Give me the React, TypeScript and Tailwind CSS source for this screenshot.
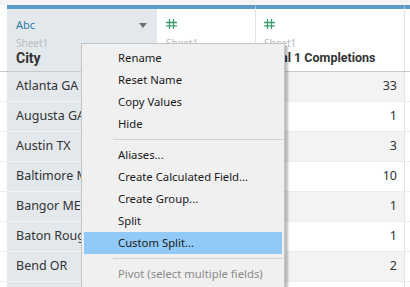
const rows = [
  { city: "Atlanta GA", value: "33" },
  { city: "Augusta GA", value: "1" },
  { city: "Austin TX", value: "3" },
  { city: "Baltimore MD", value: "10" },
  { city: "Bangor ME", value: "1" },
  { city: "Baton Rouge LA", value: "1" },
  { city: "Bend OR", value: "2" },
  { city: "", value: "" },
];

const menu: (string | null)[] = [
  "Rename",
  "Reset Name",
  "Copy Values",
  "Hide",
  null,
  "Aliases...",
  "Create Calculated Field...",
  "Create Group...",
  "Split",
  "Custom Split...",
  null,
];

function Hash() {
  return (
    <svg width="11" height="10" viewBox="0 0 11 10">
      <path d="M3.5 0v10M7.5 0v10M0 3.5h11M0 6.8h11" stroke="#3f9d6b" strokeWidth="1.3" fill="none" />
    </svg>
  );
}

export default function App() {
  return (
    <div className="relative w-[410px] h-[287px] overflow-hidden bg-white font-['Noto_Sans',sans-serif]">
      <div className="h-[5px] bg-[#f4f4f4]" />
      <div className="flex h-[67px] border-b border-[#cbcbcb]">
        <div className="w-[7px] bg-white" />
        <div className="w-[150px] flex flex-col bg-[#e3e8ec] border-t-4 border-[#5b9bc5] px-[9px]">
          <div className="flex items-center justify-between h-[16px] mt-[8px]">
            <span className="text-[11px] text-[#2f78a5]">Abc</span>
            <span className="w-0 h-0 border-l-[4px] border-r-[4px] border-t-[5px] border-l-transparent border-r-transparent border-t-[#6b7076] mr-[1px]" />
          </div>
          <span className="mt-[3px] text-[10px] leading-[14px] text-[#b8bcbf]">Sheet1</span>
          <span className="font-['Roboto',sans-serif] text-[14px] leading-[16px] font-bold text-[#333]">City</span>
        </div>
        <div className="w-px bg-white border-t-4 border-[#5b9bc5]" />
        <div className="w-[98px] flex flex-col bg-white border-t-4 border-[#5b9bc5] px-[8px] border-r border-r-[#e4e4e4]">
          <div className="flex items-center h-[16px] mt-[7px]">
            <Hash />
          </div>
          <span className="mt-[4px] text-[10px] leading-[14px] text-[#b8bcbf]">Sheet1</span>
        </div>
        <div className="w-[149px] flex flex-col bg-white border-t-4 border-[#5b9bc5] px-[8px] border-r border-r-[#e4e4e4]">
          <div className="flex items-center h-[16px] mt-[7px]">
            <Hash />
          </div>
          <span className="mt-[4px] text-[10px] leading-[14px] text-[#b8bcbf]">Sheet1</span>
          <span className="ml-[-1px] font-['Roboto',sans-serif] text-[12.5px] leading-[16px] font-bold text-[#333] whitespace-nowrap">Total 1 Completions</span>
        </div>
        <div className="flex-1 bg-white border-t-4 border-[#5b9bc5]" />
      </div>
      <div className="flex flex-col">
        {rows.map((r, i) => (
          <div key={i} className="flex h-[30px] border-b border-[#ececec]">
            <div className="w-[7px] bg-white" />
            <div className="w-[150px] bg-[#e3e8ec] border-b border-[#f2f4f6] -mb-px flex items-center px-[9px] text-[12.5px] text-[#333] whitespace-nowrap overflow-hidden">
              {r.city}
            </div>
            <div className="w-px bg-white" />
            <div className={`w-[98px] ${i % 2 === 0 ? "bg-[#f3f3f3]" : "bg-white"}`} />
            <div className={`w-[149px] flex items-center justify-end pr-[7px] text-[12.5px] text-[#333] border-r border-[#e4e4e4] ${i % 2 === 0 ? "bg-[#f3f3f3]" : "bg-white"}`}>
              {r.value}
            </div>
            <div className="flex-1 bg-white" />
          </div>
        ))}
      </div>

      <div className="absolute left-[81px] top-[43px] w-[204px] bg-[#f0f0f0] border border-[#c4c4c4] shadow-[3px_3px_2px_rgba(0,0,0,0.25)] pt-[3px] pb-[4px] text-[11.3px] text-[#1a1a1a]">
        {menu.map((m, i) =>
          m === null ? (
            <div key={i} className="ml-[31px] mr-[1px] my-[4px] h-px bg-[#d2d2d2]" />
          ) : (
            <div
              key={i}
              className={`h-[22px] flex items-center pl-[34px] mx-[2px] ${m === "Custom Split..." ? "bg-[#91c9f7]" : ""}`}
            >
              {m}
            </div>
          )
        )}
        <div className="h-[22px] flex items-center pl-[34px] mx-[2px] text-[#8a8a8a]">
          Pivot (select multiple fields)
        </div>
      </div>
    </div>
  );
}
